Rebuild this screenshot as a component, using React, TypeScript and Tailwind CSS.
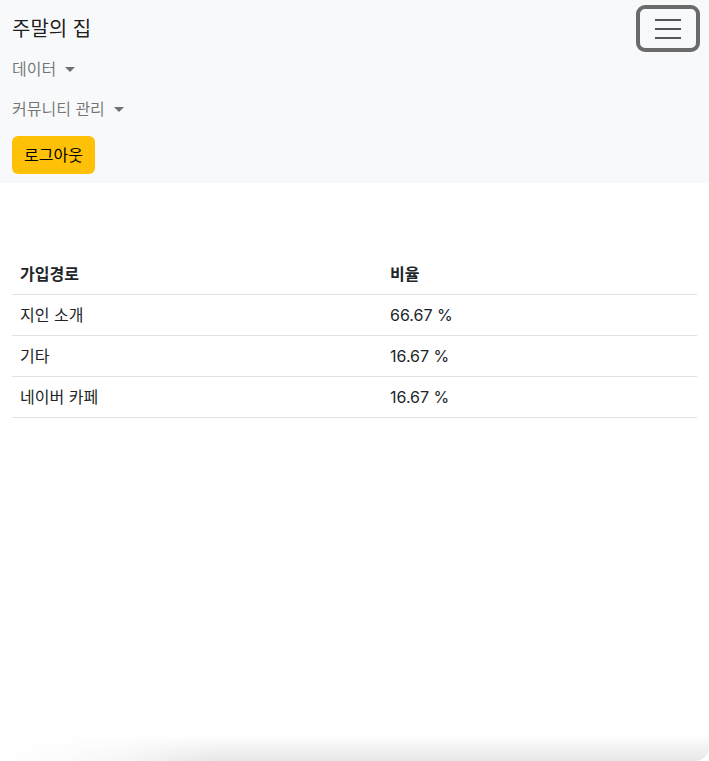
import React from 'react';

const rows = [
  { source: '지인 소개', ratio: '66.67 %' },
  { source: '기타', ratio: '16.67 %' },
  { source: '네이버 카페', ratio: '16.67 %' },
];

const Caret: React.FC = () => (
  <span className="ml-[9px] inline-block h-0 w-0 border-x-[5px] border-t-[5px] border-x-transparent border-t-current align-middle" />
);

const App: React.FC = () => {
  return (
    <div
      className="relative min-h-[761px] bg-white text-[#212529]"
      style={{ fontFamily: 'Inter, "Noto Sans CJK KR", sans-serif' }}
    >
      <nav className="bg-[#f8f9fa] px-3 pt-2 pb-2">
        <div className="flex items-start justify-between">
          <a className="pt-[6px] text-[20px] leading-[30px] text-black/90">주말의 집</a>
          <button className="-mt-[3px] -mr-[3px] flex h-[47px] w-[64px] items-center justify-center rounded-[9px] border-[4px] border-[#6b6b6b]">
            <svg width="28" height="22" viewBox="0 0 28 22" fill="none">
              <path d="M1 2h26M1 11h26M1 20h26" stroke="#555" strokeWidth="2" />
            </svg>
          </button>
        </div>
        <ul className="-mt-[3px] flex flex-col text-base text-black/55">
          <li className="flex items-center py-2 leading-6">
            데이터
            <Caret />
          </li>
          <li className="flex items-center py-2 leading-6">
            커뮤니티 관리
            <Caret />
          </li>
        </ul>
        <button className="mt-[7px] mb-[1px] rounded-[6px] bg-[#ffc107] px-3 py-[6px] text-base leading-[26px] text-black">
          로그아웃
        </button>
      </nav>

      <main className="px-3 pt-[71px]">
        <table className="w-full border-collapse text-left text-base">
          <thead>
            <tr className="border-b border-[#dee2e6]">
              <th className="w-[370px] px-2 py-2 leading-6 font-bold">가입경로</th>
              <th className="px-2 py-2 leading-6 font-bold">비율</th>
            </tr>
          </thead>
          <tbody>
            {rows.map((r) => (
              <tr key={r.source} className="border-b border-[#dee2e6]">
                <td className="px-2 py-2 leading-6">{r.source}</td>
                <td className="px-2 py-2 leading-6">{r.ratio}</td>
              </tr>
            ))}
          </tbody>
        </table>
      </main>

      <div className="pointer-events-none fixed inset-x-0 bottom-0 h-[26px] overflow-hidden">
        <div className="absolute inset-0 rounded-b-[14px] bg-gradient-to-b from-transparent to-[#e6e6e6]" />
        <div className="absolute inset-y-0 left-0 w-[220px] bg-gradient-to-r from-white via-white/70 to-transparent" />
      </div>
    </div>
  );
};

export default App;
